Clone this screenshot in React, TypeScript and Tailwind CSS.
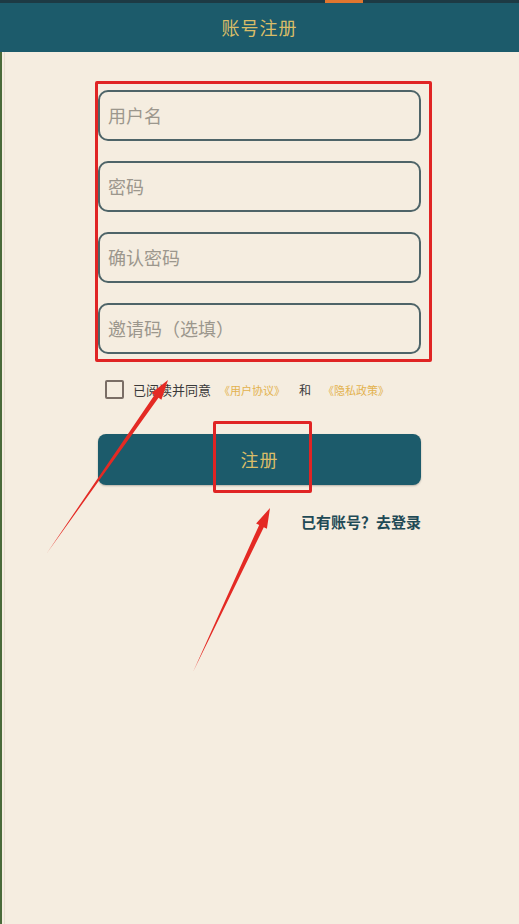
export default function App() {
  const fields = ['用户名', '密码', '确认密码', '邀请码（选填）']

  return (
    <div
      className="relative min-h-[924px] w-[519px] overflow-hidden bg-[#f5ede0]"
      style={{ fontFamily: '"Noto Sans CJK SC", "Noto Sans", sans-serif' }}
    >
      {/* status strip + title bar */}
      <div className="h-[3px] bg-[#1d3a44] flex">
        <div className="ml-[325px] w-[38px] bg-[#e0762f]" />
      </div>
      <div className="h-[49px] bg-[#1c5b6b] flex items-center justify-center">
        <span className="text-[18px] text-[#d9bd68] tracking-[1px]">账号注册</span>
      </div>

      <div className="flex">
        <div className="w-[2px] self-stretch min-h-[872px] bg-[#4a6a3a]" />
        <div className="w-[2px] self-stretch bg-[#f5ede0]" />
        <div className="w-[1px] self-stretch bg-[#e6ddcf]" />

        <div className="flex flex-col">
          {/* inputs, framed by the red annotation box */}
          <div className="ml-[90px] mt-[29px] w-[337px] border-[3px] border-[#e02424] rounded-[2px] pt-[6px] pb-[5px] pr-[8px] flex flex-col gap-[20px]">
            {fields.map((f) => (
              <div
                key={f}
                className="h-[51px] w-full rounded-[10px] border-2 border-[#4e6468] flex items-center pl-[8px] text-[18px] text-[#9c978d]"
              >
                {f}
              </div>
            ))}
          </div>

          <div className="ml-[100px] mt-[18px] flex items-center">
            <div className="w-[19px] h-[19px] border-2 border-[#7a6e66] rounded-[2px]" />
            <span className="ml-[9px] text-[13px] text-[#3a3a3a]">已阅读并同意</span>
            <span className="ml-[8px] text-[11px] text-[#e3b24e]">《用户协议》</span>
            <span className="ml-[14px] text-[12px] text-[#3a3a3a]">和</span>
            <span className="ml-[12px] text-[11px] text-[#e3b24e]">《隐私政策》</span>
          </div>

          <div className="relative ml-[93px] mt-[34px] w-[323px] h-[51px] rounded-[8px] bg-[#1c5b6b] flex items-center justify-center shadow-[0_1px_2px_rgba(0,0,0,0.25)]">
            <span className="text-[18px] text-[#d9bd68] tracking-[1px]">注册</span>
            <div className="absolute left-[115px] top-[-13px] w-[99px] h-[72px] border-[3px] border-[#e02424] rounded-[2px]" />
          </div>

          <div className="ml-[93px] w-[323px] mt-[26px] flex justify-end">
            <span className="text-[15px] font-bold text-[#1f4a56]">已有账号？去登录</span>
          </div>
        </div>
      </div>

      {/* red annotation arrows */}
      <svg className="absolute left-0 top-0 pointer-events-none" width="519" height="924">
        <polygon points="47,553 154.5,395 151.6,393 168,380 161.4,399.8 158.5,397.8" fill="#e42a24" />
        <polygon points="193,672 259.2,525 256.1,523.6 270,508 266.9,528.7 263.8,527.2" fill="#e42a24" />
      </svg>
    </div>
  )
}
